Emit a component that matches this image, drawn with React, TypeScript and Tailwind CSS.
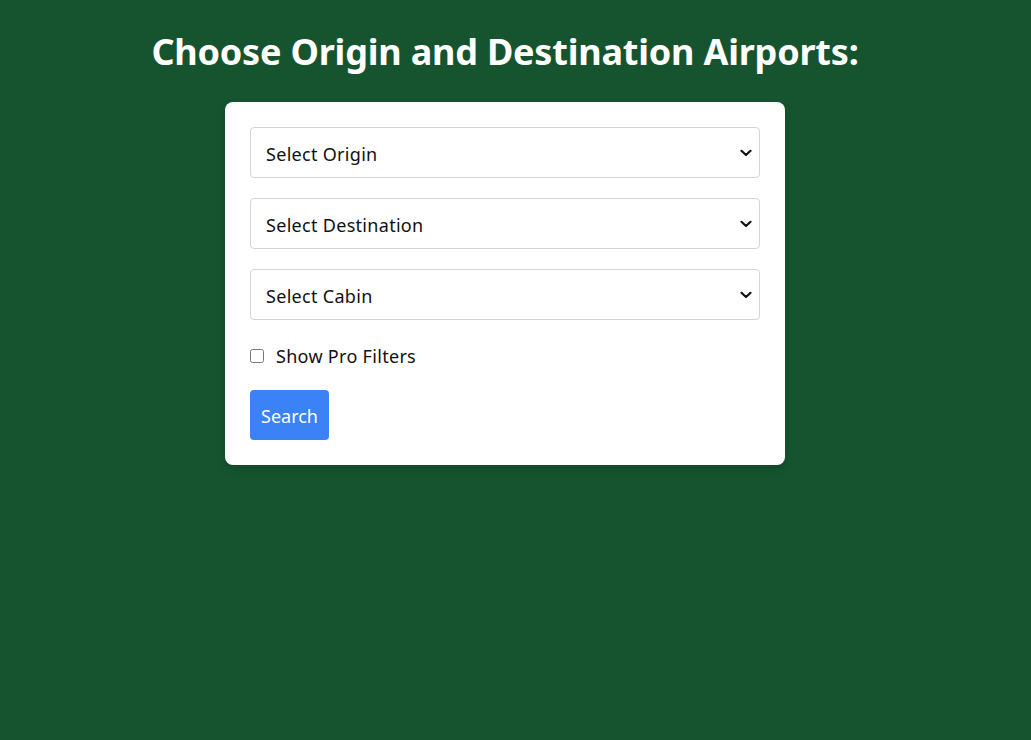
import React from "react";

const Chevron = () => (
  <svg
    className="pointer-events-none absolute right-[8px] top-1/2 -translate-y-1/2"
    width="12"
    height="8"
    viewBox="0 0 12 8"
    fill="none"
  >
    <path d="M1.5 1.8 L6 6 L10.5 1.8" stroke="#111" strokeWidth="2.2" strokeLinecap="round" strokeLinejoin="round" />
  </svg>
);

function Select({ label }: { label: string }) {
  return (
    <div className="relative">
      <select
        className="h-[51px] w-full appearance-none rounded-[4px] border border-[#d4d4d8] bg-white pl-[15px] pt-[3px] text-[18px] tracking-[0.3px] text-[#111] outline-none"
        defaultValue=""
      >
        <option value="">{label}</option>
      </select>
      <Chevron />
    </div>
  );
}

export default function App() {
  return (
    <div
      className="min-h-[740px] w-full bg-[#165430] pr-[21px]"
      style={{ fontFamily: '"Segoe UI", "Noto Sans", "Open Sans", sans-serif' }}
    >
      <div className="flex flex-col items-center">
        <h1 className="mt-[25px] text-[36px] leading-[54px] font-bold text-white tracking-[-0.2px]">
          Choose Origin and Destination Airports:
        </h1>
        <div className="mt-[23px] w-[560px] rounded-[8px] bg-white p-[25px] shadow-[0_4px_8px_rgba(0,0,0,0.15)]">
          <div className="flex flex-col gap-[20px]">
            <Select label="Select Origin" />
            <Select label="Select Destination" />
            <Select label="Select Cabin" />
          </div>
          <label className="mt-[20px] flex h-[30px] items-center gap-[12px] pt-[2px] text-[18px] tracking-[0.3px] text-[#111]">
            <input type="checkbox" className="m-0 h-[14px] w-[14px]" />
            <span>Show Pro Filters</span>
          </label>
          <button className="mt-[20px] h-[50px] w-[79px] rounded-[4px] bg-[#3b82f6] pt-[2px] text-[18px] text-white">
            Search
          </button>
        </div>
      </div>
    </div>
  );
}
